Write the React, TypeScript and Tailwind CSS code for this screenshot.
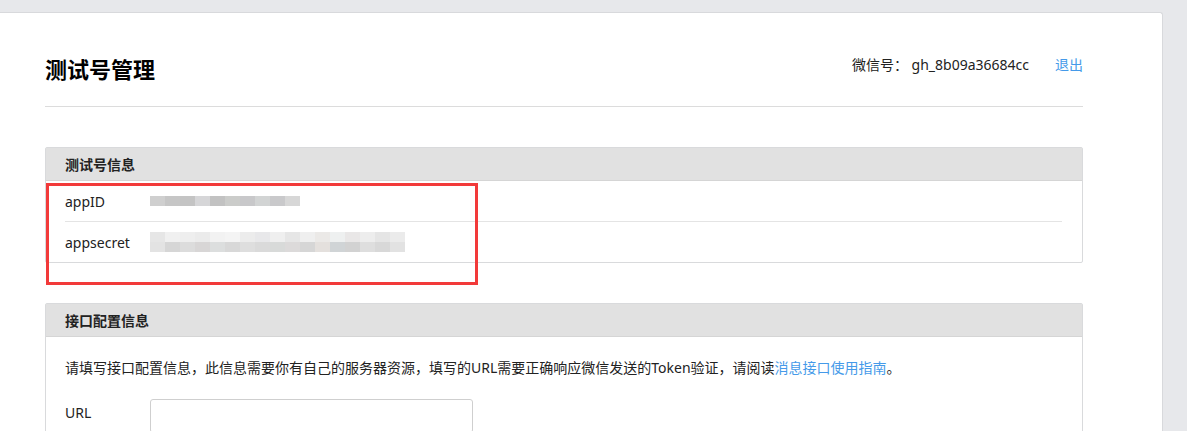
import React from "react";

const idBlur = ["#cfcfcf", "#c6c6c6", "#c4c4c4", "#d6d6d8", "#c2c2c2", "#cbccca", "#c8c8ca", "#d2d4d4", "#c9c9cb", "#d7d7d7"];
const secretTop = ["#e6e6e6", "#f0f0f0", "#eeeeee", "#ebebeb", "#f2f2f2", "#f4f4f4", "#ececec", "#e8e8ea", "#efefef", "#e6e6e6", "#efefef", "#ebe9e7", "#eef0f0", "#e9e7e7", "#ededed", "#e5e5e5", "#ebebeb"];
const secretBottom = ["#e3e3e3", "#d6d6d6", "#dcdcdc", "#d8d6d6", "#dcdede", "#d8d8d8", "#dedede", "#dadada", "#d8dad9", "#dcdada", "#d6d6d6", "#e4e0dd", "#d0d4d6", "#d2d2d2", "#dedede", "#d8d8d8", "#e2e2e2"];

function Blur({ rows }: { rows: string[][] }) {
  return (
    <div className="flex flex-col">
      {rows.map((row, i) => (
        <div key={i} className="flex">
          {row.map((c, j) => (
            <span key={j} className="block w-[15px] h-[10px]" style={{ backgroundColor: c }} />
          ))}
        </div>
      ))}
    </div>
  );
}

function PanelHead({ title }: { title: string }) {
  return (
    <div className="h-[33px] bg-[#e1e1e1] border-b border-[#d5d5d5] px-[19px] flex items-center font-bold text-[14px] text-[#222]">
      {title}
    </div>
  );
}

export default function App() {
  return (
    <div
      className="min-h-[431px] bg-[#e7e8eb] pt-[12px] overflow-hidden text-[14px] text-[#222]"
      style={{ fontFamily: '"Noto Sans", "Noto Sans CJK SC", sans-serif' }}
    >
      <div className="w-[1163px] min-h-[419px] bg-white rounded-tr-[3px] border-r border-t border-[#d8d9dc] pl-[45px] pr-[79px]">
        {/* header */}
        <div className="flex justify-between pt-[40px] pb-[21px] border-b border-[#dcdcdc]">
          <h1 className="text-[22px] leading-[32px] font-bold text-black">测试号管理</h1>
          <div className="flex mt-[2px] leading-[20px]">
            <span className="-ml-[3px]">微信号：&nbsp;gh_8b09a36684cc</span>
            <a className="ml-[26px] text-[#459ae9]">退出</a>
          </div>
        </div>

        {/* 测试号信息 */}
        <div className="relative mt-[40px] border border-[#d9dadc] rounded-[2px]">
          <PanelHead title="测试号信息" />
          <div className="px-[19px] pr-[20px]">
            <div className="flex items-center h-[41px] border-b border-[#e4e4e4]">
              <span className="w-[85px]">appID</span>
              <Blur rows={[idBlur]} />
            </div>
            <div className="flex items-center h-[40px]">
              <span className="w-[85px]">appsecret</span>
              <Blur rows={[secretTop, secretBottom]} />
            </div>
          </div>
          <div className="absolute left-[0px] top-[35px] w-[432px] h-[102px] border-[3px] border-[#f23a3a]" />
        </div>

        {/* 接口配置信息 */}
        <div className="mt-[40px] border border-[#d9dadc] rounded-[2px] pb-[20px]">
          <PanelHead title="接口配置信息" />
          <div className="px-[19px]">
            <p className="mt-[21px] leading-[20px]">
              请填写接口配置信息，此信息需要你有自己的服务器资源，填写的URL需要正确响应微信发送的Token验证，请阅读
              <a className="text-[#459ae9]">消息接口使用指南</a>。
            </p>
            <div className="flex items-start mt-[21px]">
              <span className="w-[85px] mt-[4px] leading-[20px]">URL</span>
              <input className="w-[323px] h-[34px] border border-[#cfcfcf] rounded-[3px] outline-none px-2" />
            </div>
          </div>
        </div>
      </div>
    </div>
  );
}
